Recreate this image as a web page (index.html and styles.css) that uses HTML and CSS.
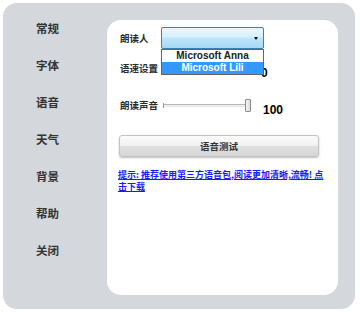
FILE: index.html
```html
<!DOCTYPE html>
<html lang="zh">
<head>
<meta charset="utf-8">
<title>设置</title>
<link rel="stylesheet" href="styles.css">
</head>
<body>
<div class="frame">
  <nav class="sidebar">
    <div class="nav-item">常规</div>
    <div class="nav-item">字体</div>
    <div class="nav-item">语音</div>
    <div class="nav-item">天气</div>
    <div class="nav-item">背景</div>
    <div class="nav-item">帮助</div>
    <div class="nav-item">关闭</div>
  </nav>
  <main class="panel">
    <div class="row row-reader">
      <span class="label">朗读人</span>
      <div class="combo">
        <div class="combo-box"><span class="arrow"></span></div>
        <ul class="combo-list">
          <li class="option">Microsoft Anna</li>
          <li class="option selected">Microsoft Lili</li>
        </ul>
      </div>
    </div>
    <div class="row row-speed">
      <span class="label">语速设置</span>
      <div class="slider-space"></div>
      <span class="value">0</span>
    </div>
    <div class="row row-volume">
      <span class="label">朗读声音</span>
      <div class="slider">
        <span class="tick"></span>
        <span class="track"></span>
        <span class="thumb"></span>
      </div>
      <span class="value">100</span>
    </div>
    <button class="test-btn">语音测试</button>
    <a class="tip" href="#">提示: 推荐使用第三方语音包,阅读更加清晰,流畅! 点击下载</a>
  </main>
</div>
</body>
</html>
```
FILE: styles.css
```css
* { box-sizing: border-box; }
html, body { margin: 0; padding: 0; background: #ffffff; }
body {
  font-family: "Noto Sans CJK SC", "Liberation Sans", sans-serif;
  width: 360px;
  height: 313px;
  overflow: hidden;
}
.frame {
  margin: 3px 0 0 3px;
  width: 352px;
  height: 306px;
  background: #d4d7dc;
  border-radius: 14px;
  display: flex;
  align-items: flex-start;
}
.sidebar {
  width: 104px;
  flex: none;
  padding: 7px 0 0 33px;
  display: flex;
  flex-direction: column;
}
.nav-item {
  height: 37px;
  line-height: 37px;
  font-size: 11.5px;
  font-weight: 700;
  color: #333;
}
.panel {
  margin-top: 17px;
  width: 231px;
  height: 275px;
  background: #ffffff;
  border-radius: 14px;
  padding: 7px 0 0 13px;
  display: flex;
  flex-direction: column;
  align-items: flex-start;
}
.row {
  display: flex;
  align-items: center;
  height: 22px;
}
.row-speed { margin-top: 8px; }
.row-volume { margin-top: 15px; }
.label {
  width: 41px;
  flex: none;
  font-size: 9.5px;
  font-weight: 700;
  color: #2a2a2a;
  white-space: nowrap;
}
.combo {
  position: relative;
  width: 103px;
  height: 22px;
  z-index: 2;
}
.combo-box {
  height: 22px;
  border: 1px solid #3c7fb1;
  border-radius: 2px;
  background: linear-gradient(#eaf6fd, #d9f0fc 45%, #bee6fd 50%, #a7d9f5);
  display: flex;
  align-items: center;
  justify-content: flex-end;
  padding-right: 5px;
}
.arrow {
  width: 0;
  height: 0;
  border-left: 2.5px solid transparent;
  border-right: 2.5px solid transparent;
  border-top: 3px solid #000;
}
.combo-list {
  position: absolute;
  left: 0;
  top: 22px;
  width: 103px;
  margin: 0;
  padding: 0;
  list-style: none;
  background: #fff;
  border: 1px solid #646464;
}
.option {
  height: 12px;
  line-height: 12px;
  text-align: center;
  font-family: "Liberation Sans", Arial, sans-serif;
  font-weight: bold;
  font-size: 10px;
  color: #222;
}
.option.selected {
  background: #3399ff;
  color: #ffffff;
}
.slider-space { width: 88px; flex: none; }
.slider {
  width: 88px;
  margin-left: 2px;
  flex: none;
  display: flex;
  align-items: center;
}
.tick {
  width: 1px;
  height: 5px;
  background: #9a9a9a;
  flex: none;
}
.track {
  flex: 1;
  height: 3px;
  border-top: 1px solid #b5b5b5;
  border-bottom: 1px solid #e6e6e6;
  background: #f2f2f2;
}
.thumb {
  width: 6px;
  height: 13px;
  flex: none;
  border: 1px solid #8a8a8a;
  border-radius: 1px;
  background: linear-gradient(90deg, #f4f4f4, #dcdcdc);
}
.value {
  margin-left: 12px;
  padding-top: 9px;
  font-family: "Liberation Sans", Arial, sans-serif;
  font-weight: bold;
  font-size: 12px;
  color: #000;
}
.test-btn {
  margin-top: 19px;
  margin-left: -1px;
  width: 200px;
  height: 22px;
  padding: 0;
  border: 1px solid #c2c2c2;
  border-radius: 3px;
  background: linear-gradient(#fbfbfb, #f0f0f0 50%, #e0e0e0 51%, #d6d6d6);
  box-shadow: 0 1px 2px rgba(0,0,0,0.25);
  font-family: "Noto Sans CJK SC", sans-serif;
  font-size: 9.5px;
  font-weight: 700;
  color: #333;
}
.tip {
  margin-top: 12px;
  margin-left: -2px;
  width: 207px;
  font-size: 9px;
  line-height: 12px;
  font-weight: bold;
  color: #1a1aff;
  text-decoration: underline;
}
```
